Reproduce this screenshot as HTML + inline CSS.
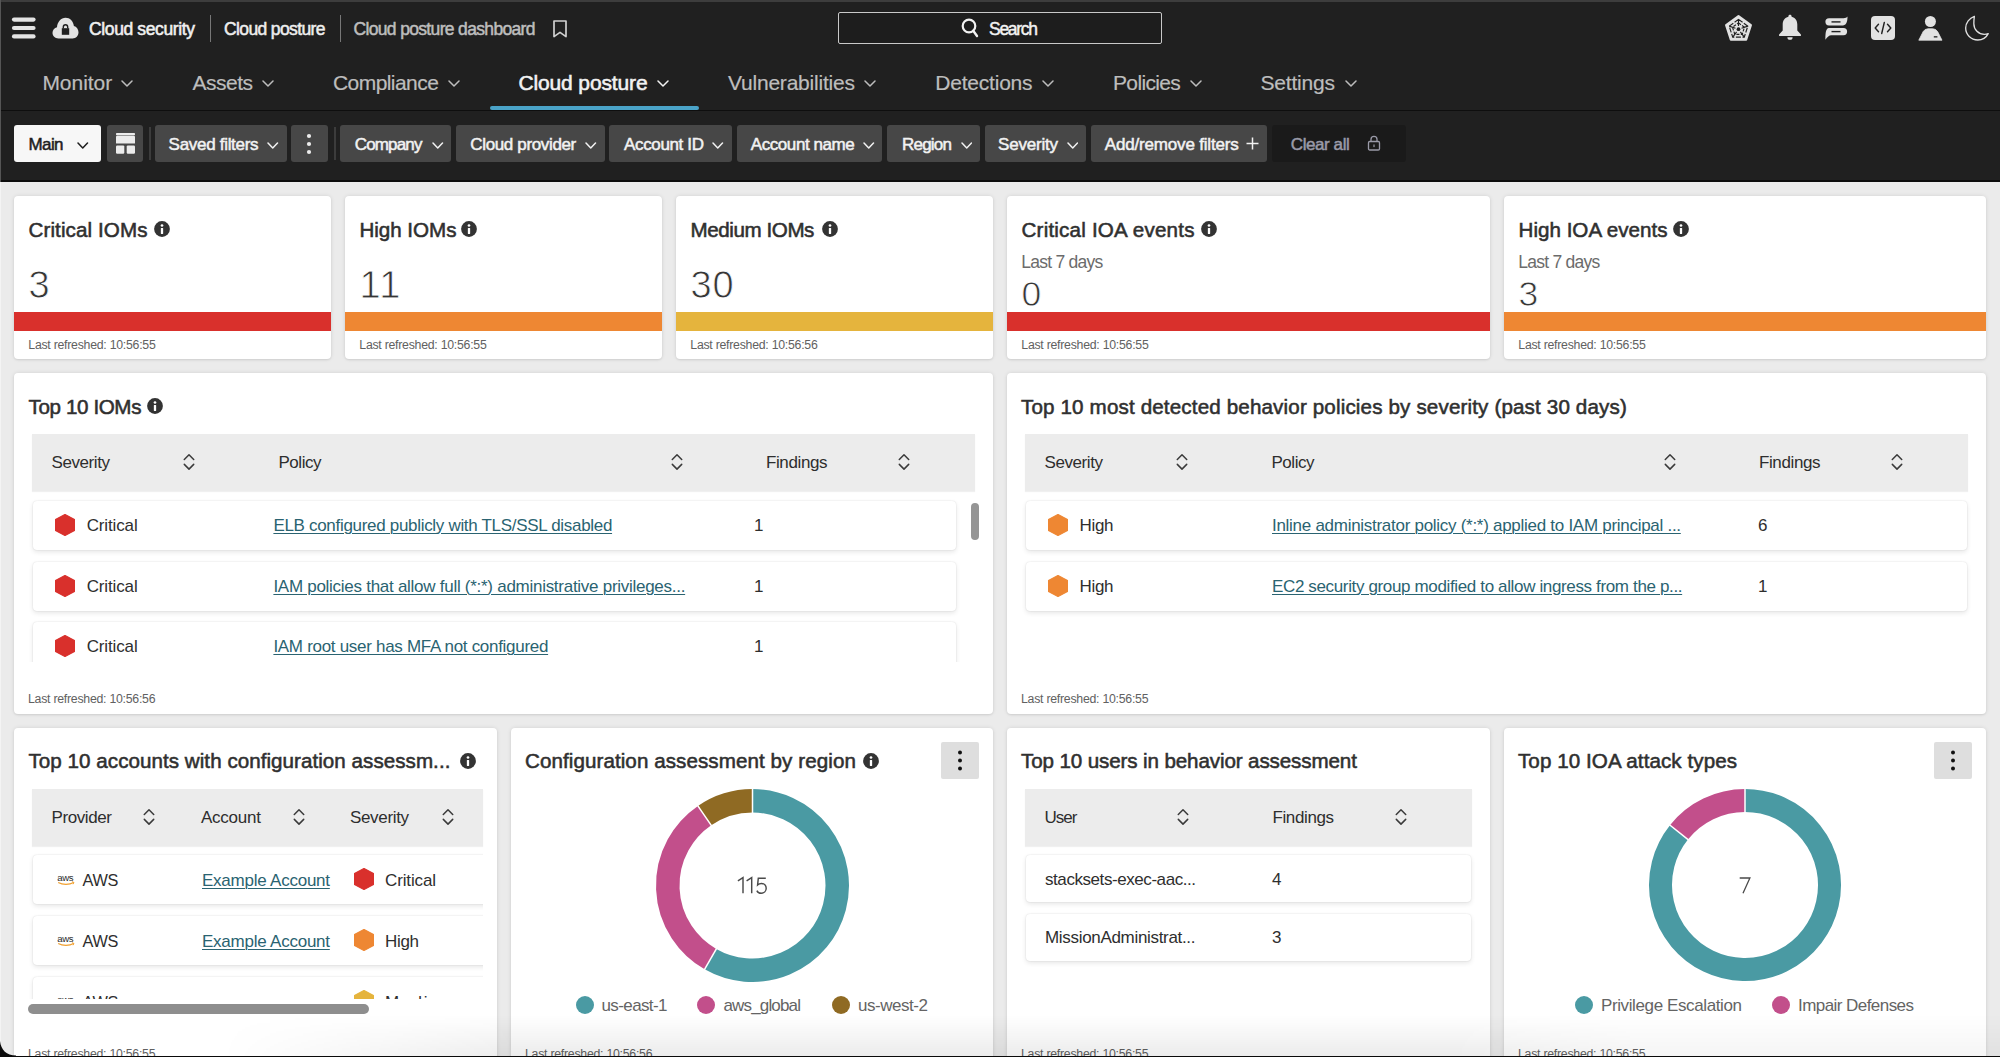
<!DOCTYPE html><html><head><meta charset="utf-8"><title>Cloud posture dashboard</title><style>
*{box-sizing:border-box;margin:0;padding:0}
html,body{width:2000px;height:1057px;overflow:hidden}
body{background:#ebebeb;font-family:"Liberation Sans",sans-serif;position:relative;color:#2b2b2b}
.sb{-webkit-text-stroke:0.45px currentColor}
.sb2{-webkit-text-stroke:0.55px currentColor}
.sm{-webkit-text-stroke:0.2px currentColor}
.sm3{-webkit-text-stroke:0.5px currentColor}
.thin{-webkit-text-stroke:0.8px #fff}
.card{position:absolute;background:#fff;border-radius:4px;box-shadow:0 0 4px rgba(0,0,0,.10),0 1px 2px rgba(0,0,0,.08)}
.row{position:absolute;background:#fff;border-radius:4px;box-shadow:0 2px 5px rgba(0,0,0,.10),0 0 1.5px rgba(0,0,0,.14)}
a{color:#2a6371;text-decoration:underline;text-underline-offset:2px;text-decoration-thickness:1px}
</style></head><body>
<div style="position:absolute;left:0px;top:0px;width:2000px;height:182px;background:#202020"></div>
<div style="position:absolute;left:0px;top:0px;width:2000px;height:2px;background:#3d3d3d"></div>
<div style="position:absolute;left:0px;top:109.5px;width:2000px;height:1.6px;background:#0e0e0e"></div>
<div style="position:absolute;left:0px;top:180px;width:2000px;height:2px;background:#0d0d0d"></div>
<svg style="position:absolute;left:11px;top:16px" width="26" height="24" viewBox="0 0 26 24"><g stroke="#e4e4e4" stroke-width="4.2" stroke-linecap="round"><line x1="3" y1="3.6" x2="22.5" y2="3.6"/><line x1="3" y1="12" x2="22.5" y2="12"/><line x1="3" y1="20.4" x2="22.5" y2="20.4"/></g></svg>
<svg style="position:absolute;left:52px;top:17px" width="27" height="22" viewBox="0 0 27 22"><path d="M6.5 21.5C3 21.5 0.5 19 0.5 15.8C0.5 13 2.4 10.8 5 10.2C5.4 5 9 0.8 13.6 0.8C17.9 0.8 21.3 4.3 21.9 8.9C24.6 9.6 26.5 12.2 26.5 15.3C26.5 18.8 24 21.5 20.6 21.5Z" fill="#e4e4e4"/><rect x="9.8" y="11.2" width="7.4" height="6.6" fill="#202020"/><path d="M11.3 11.6v-1.6a2.2 2.2 0 0 1 4.4 0v1.6" fill="none" stroke="#202020" stroke-width="1.4"/></svg>
<div class="sb2" style="position:absolute;left:89.0px;top:17.94px;font-size:17.5px;line-height:22px;color:#f0f0f0;white-space:nowrap;;letter-spacing:-0.374px">Cloud security</div>
<div style="position:absolute;left:210px;top:14.5px;width:1.2px;height:27px;background:#777"></div>
<div class="sm3" style="position:absolute;left:224.0px;top:17.94px;font-size:17.5px;line-height:22px;color:#eeeeee;white-space:nowrap;;letter-spacing:-0.620px">Cloud posture</div>
<div style="position:absolute;left:340px;top:14.5px;width:1.2px;height:27px;background:#777"></div>
<div class="sm3" style="position:absolute;left:353.5px;top:17.94px;font-size:17.5px;line-height:22px;color:#bdbdbd;white-space:nowrap;;letter-spacing:-0.660px">Cloud posture dashboard</div>
<svg style="position:absolute;left:552px;top:19.5px" width="16" height="18" viewBox="0 0 16 18"><path d="M2 1h12v15.6l-6-4.2-6 4.2z" fill="none" stroke="#d0d0d0" stroke-width="1.7" stroke-linejoin="round"/></svg>
<div style="position:absolute;left:838px;top:12px;width:324px;height:32px;border:1.6px solid #c9c9c9;border-radius:2px;background:#1d1d1d"></div>
<svg style="position:absolute;left:961px;top:18px" width="19" height="20" viewBox="0 0 19 20"><circle cx="8" cy="8" r="6.3" fill="none" stroke="#f2f2f2" stroke-width="2.2"/><line x1="12.2" y1="12.8" x2="16" y2="18" stroke="#f2f2f2" stroke-width="2.4" stroke-linecap="round"/></svg>
<div class="sb" style="position:absolute;left:989.0px;top:17.94px;font-size:17.5px;line-height:22px;color:#f2f2f2;white-space:nowrap;;letter-spacing:-1.295px">Search</div>
<svg style="position:absolute;left:1724px;top:14px" width="29" height="29" viewBox="0 0 29 29"><polygon points="14.50,2.20 26.86,11.18 22.14,25.72 6.86,25.72 2.14,11.18" fill="#e2e2e2" stroke="#e2e2e2" stroke-width="2.2" stroke-linejoin="round"/><g stroke="#202020" stroke-width="1.15" fill="none" stroke-dasharray="5 1.6"><polygon points="14.50,5.40 23.82,12.17 20.26,23.13 8.74,23.13 5.18,12.17"/><polygon points="14.50,8.90 20.49,13.25 18.20,20.30 10.80,20.30 8.51,13.25" stroke-dasharray="3 1.4"/></g><g stroke="#202020" stroke-width="1.15"><line x1="14.50" y1="12.00" x2="14.50" y2="5.40"/><line x1="17.54" y1="14.21" x2="23.82" y2="12.17"/><line x1="16.38" y1="17.79" x2="20.26" y2="23.13"/><line x1="12.62" y1="17.79" x2="8.74" y2="23.13"/><line x1="11.46" y1="14.21" x2="5.18" y2="12.17"/></g><circle cx="14.5" cy="15.2" r="1.9" fill="#202020"/></svg>
<svg style="position:absolute;left:1778px;top:14px" width="24" height="27" viewBox="0 0 24 27"><path d="M12 0.8c1 0 1.6 0.7 1.6 1.6v0.4c3.6 0.8 5.7 3.9 5.7 7.8v5.8l3.6 4.1v1.4H1.1v-1.4l3.6-4.1V10.6c0-3.9 2.1-7 5.7-7.8V2.4c0-0.9 0.6-1.6 1.6-1.6z" fill="#e2e2e2"/><path d="M9.4 23.2h5.2a2.6 2.6 0 0 1-5.2 0z" fill="#e2e2e2"/></svg>
<svg style="position:absolute;left:1825px;top:16px" width="23" height="24" viewBox="0 0 23 24"><path d="M4 2.2h14.5c2 0 3.2-0.7 4-1.6 0 3.9-0.6 8.8-4.4 8.8H4a3.6 3.6 0 0 1 0-7.2z" fill="#e2e2e2"/><path d="M4 12h14.5a3.6 3.6 0 0 1 0 7.2H6.2c-2.2 0-3.6 1.6-5.8 4.6C0.4 19 0.4 12 4 12z" fill="#e2e2e2"/><rect x="6.5" y="5.2" width="9" height="1.4" fill="#202020"/><rect x="6.5" y="14.9" width="9" height="1.4" fill="#202020"/></svg>
<svg style="position:absolute;left:1871px;top:16px" width="24" height="24" viewBox="0 0 24 24"><rect x="0" y="0" width="24" height="24" rx="4" fill="#e2e2e2"/><g fill="none" stroke="#202020" stroke-width="1.4" stroke-linecap="round" stroke-linejoin="round"><polyline points="7.5,8.2 4.2,12 7.5,15.8"/><polyline points="16.5,8.2 19.8,12 16.5,15.8"/><line x1="13.3" y1="6.5" x2="10.7" y2="17.5"/></g></svg>
<svg style="position:absolute;left:1918px;top:16px" width="25" height="25" viewBox="0 0 25 25"><circle cx="12.4" cy="5.5" r="5.5" fill="#e2e2e2"/><path d="M0.8 24.2L5.2 15.6Q6.8 12.8 10 12.8H14.8Q18 12.8 19.6 15.6L24 24.2Z" fill="#e2e2e2" stroke="#e2e2e2" stroke-width="0.8" stroke-linejoin="round"/><rect x="15.8" y="20.2" width="3.6" height="1.3" fill="#202020"/></svg>
<svg style="position:absolute;left:1963px;top:14px" width="27" height="28" viewBox="0 0 28 29"><g transform="translate(14 14.5) scale(0.92) translate(-14 -14.5)"><path d="M11.6 1.3C6 3.3 1.8 8.5 1.8 14.6c0 7.5 6.1 13.4 13.6 13.4 5.1 0 9.6-2.9 11.8-7.2-1.3 0.5-2.8 0.8-4.3 0.8-6.6 0-11.9-5.3-11.9-11.9 0-3.1 0.2-5.8 0.6-8.4z" fill="none" stroke="#e0e0e0" stroke-width="1.5" stroke-linejoin="round"/></g></svg>
<div class="sm" style="position:absolute;left:42.4px;top:70.32px;font-size:21.0px;line-height:26px;color:#bdbdbd;white-space:nowrap;;letter-spacing:-0.039px">Monitor</div>
<svg style="position:absolute;left:121px;top:80px" width="12" height="7" viewBox="0 0 12 7"><polyline points="1,1 6.0,6 11,1" fill="none" stroke="#bdbdbd" stroke-width="1.5" stroke-linecap="round" stroke-linejoin="round"/></svg>
<div class="sm" style="position:absolute;left:192.6px;top:70.32px;font-size:21.0px;line-height:26px;color:#bdbdbd;white-space:nowrap;;letter-spacing:-0.520px">Assets</div>
<svg style="position:absolute;left:262px;top:80px" width="12" height="7" viewBox="0 0 12 7"><polyline points="1,1 6.0,6 11,1" fill="none" stroke="#bdbdbd" stroke-width="1.5" stroke-linecap="round" stroke-linejoin="round"/></svg>
<div class="sm" style="position:absolute;left:333.0px;top:70.32px;font-size:21.0px;line-height:26px;color:#bdbdbd;white-space:nowrap;;letter-spacing:-0.564px">Compliance</div>
<svg style="position:absolute;left:448px;top:80px" width="12" height="7" viewBox="0 0 12 7"><polyline points="1,1 6.0,6 11,1" fill="none" stroke="#bdbdbd" stroke-width="1.5" stroke-linecap="round" stroke-linejoin="round"/></svg>
<div class="sb2" style="position:absolute;left:518.4px;top:70.32px;font-size:21.0px;line-height:26px;color:#f2f2f2;white-space:nowrap;;letter-spacing:-0.127px">Cloud posture</div>
<svg style="position:absolute;left:657px;top:80px" width="12" height="7" viewBox="0 0 12 7"><polyline points="1,1 6.0,6 11,1" fill="none" stroke="#f2f2f2" stroke-width="1.5" stroke-linecap="round" stroke-linejoin="round"/></svg>
<div class="sm" style="position:absolute;left:728.0px;top:70.32px;font-size:21.0px;line-height:26px;color:#bdbdbd;white-space:nowrap;;letter-spacing:-0.214px">Vulnerabilities</div>
<svg style="position:absolute;left:864px;top:80px" width="12" height="7" viewBox="0 0 12 7"><polyline points="1,1 6.0,6 11,1" fill="none" stroke="#bdbdbd" stroke-width="1.5" stroke-linecap="round" stroke-linejoin="round"/></svg>
<div class="sm" style="position:absolute;left:935.3px;top:70.32px;font-size:21.0px;line-height:26px;color:#bdbdbd;white-space:nowrap;;letter-spacing:-0.214px">Detections</div>
<svg style="position:absolute;left:1041.6px;top:80px" width="12" height="7" viewBox="0 0 12 7"><polyline points="1,1 6.0,6 11,1" fill="none" stroke="#bdbdbd" stroke-width="1.5" stroke-linecap="round" stroke-linejoin="round"/></svg>
<div class="sm" style="position:absolute;left:1113.0px;top:70.32px;font-size:21.0px;line-height:26px;color:#bdbdbd;white-space:nowrap;;letter-spacing:-0.649px">Policies</div>
<svg style="position:absolute;left:1190px;top:80px" width="12" height="7" viewBox="0 0 12 7"><polyline points="1,1 6.0,6 11,1" fill="none" stroke="#bdbdbd" stroke-width="1.5" stroke-linecap="round" stroke-linejoin="round"/></svg>
<div class="sm" style="position:absolute;left:1260.5px;top:70.32px;font-size:21.0px;line-height:26px;color:#bdbdbd;white-space:nowrap;;letter-spacing:-0.202px">Settings</div>
<svg style="position:absolute;left:1344.5px;top:80px" width="12" height="7" viewBox="0 0 12 7"><polyline points="1,1 6.0,6 11,1" fill="none" stroke="#bdbdbd" stroke-width="1.5" stroke-linecap="round" stroke-linejoin="round"/></svg>
<div style="position:absolute;left:490px;top:106px;width:209px;height:3.5px;background:#4aa3c8;border-radius:2px"></div>
<div style="position:absolute;left:14px;top:125px;width:87px;height:37px;background:#f7f7f7;border-radius:3px"></div>
<div class="sm3" style="position:absolute;left:28.6px;top:133.61px;font-size:17.0px;line-height:21px;color:#1e1e1e;white-space:nowrap;;letter-spacing:-0.630px">Main</div>
<svg style="position:absolute;left:77.2px;top:141.8px" width="11.5" height="7" viewBox="0 0 11.5 7"><polyline points="1,1 5.75,6 10.5,1" fill="none" stroke="#1e1e1e" stroke-width="1.5" stroke-linecap="round" stroke-linejoin="round"/></svg>
<div style="position:absolute;left:107px;top:125px;width:36px;height:37px;background:#474747;border-radius:3px"></div>
<svg style="position:absolute;left:115.5px;top:133px" width="19" height="21" viewBox="0 0 19 21"><rect x="0" y="0" width="19" height="2.4" rx="0.8" fill="#ececec"/><rect x="0" y="3.1" width="19" height="7.4" rx="0.6" fill="#ececec"/><rect x="0" y="12.4" width="8.3" height="8.3" rx="1.2" fill="#ececec"/><rect x="10.7" y="12.4" width="8.3" height="8.3" rx="1.2" fill="#ececec"/></svg>
<div style="position:absolute;left:149px;top:127px;width:2px;height:33px;background:#3c3c3c"></div>
<div style="position:absolute;left:155px;top:125px;width:132px;height:37px;background:#474747;border-radius:3px"></div>
<div class="sm3" style="position:absolute;left:168.6px;top:133.61px;font-size:17.0px;line-height:21px;color:#f2f2f2;white-space:nowrap;;letter-spacing:-0.299px">Saved filters</div>
<svg style="position:absolute;left:267.2px;top:141.8px" width="11.5" height="7" viewBox="0 0 11.5 7"><polyline points="1,1 5.75,6 10.5,1" fill="none" stroke="#f2f2f2" stroke-width="1.5" stroke-linecap="round" stroke-linejoin="round"/></svg>
<div style="position:absolute;left:291px;top:125px;width:37px;height:37px;background:#474747;border-radius:3px"></div>
<svg style="position:absolute;left:306px;top:133px" width="6" height="22" viewBox="0 0 6 22"><circle cx="3" cy="3" r="2.1" fill="#ececec"/><circle cx="3" cy="11" r="2.1" fill="#ececec"/><circle cx="3" cy="19" r="2.1" fill="#ececec"/></svg>
<div style="position:absolute;left:334px;top:127px;width:2px;height:33px;background:#3c3c3c"></div>
<div style="position:absolute;left:340px;top:125px;width:111px;height:37px;background:#474747;border-radius:3px"></div>
<div class="sm3" style="position:absolute;left:354.8px;top:133.61px;font-size:17.0px;line-height:21px;color:#f2f2f2;white-space:nowrap;;letter-spacing:-0.860px">Company</div>
<svg style="position:absolute;left:432.2px;top:141.8px" width="11.5" height="7" viewBox="0 0 11.5 7"><polyline points="1,1 5.75,6 10.5,1" fill="none" stroke="#f2f2f2" stroke-width="1.5" stroke-linecap="round" stroke-linejoin="round"/></svg>
<div style="position:absolute;left:456px;top:125px;width:149px;height:37px;background:#474747;border-radius:3px"></div>
<div class="sm3" style="position:absolute;left:470.3px;top:133.61px;font-size:17.0px;line-height:21px;color:#f2f2f2;white-space:nowrap;;letter-spacing:-0.353px">Cloud provider</div>
<svg style="position:absolute;left:585.2px;top:141.8px" width="11.5" height="7" viewBox="0 0 11.5 7"><polyline points="1,1 5.75,6 10.5,1" fill="none" stroke="#f2f2f2" stroke-width="1.5" stroke-linecap="round" stroke-linejoin="round"/></svg>
<div style="position:absolute;left:609px;top:125px;width:123px;height:37px;background:#474747;border-radius:3px"></div>
<div class="sm3" style="position:absolute;left:624.0px;top:133.61px;font-size:17.0px;line-height:21px;color:#f2f2f2;white-space:nowrap;;letter-spacing:-0.348px">Account ID</div>
<svg style="position:absolute;left:712.2px;top:141.8px" width="11.5" height="7" viewBox="0 0 11.5 7"><polyline points="1,1 5.75,6 10.5,1" fill="none" stroke="#f2f2f2" stroke-width="1.5" stroke-linecap="round" stroke-linejoin="round"/></svg>
<div style="position:absolute;left:737px;top:125px;width:145px;height:37px;background:#474747;border-radius:3px"></div>
<div class="sm3" style="position:absolute;left:750.8px;top:133.61px;font-size:17.0px;line-height:21px;color:#f2f2f2;white-space:nowrap;;letter-spacing:-0.429px">Account name</div>
<svg style="position:absolute;left:863.2px;top:141.8px" width="11.5" height="7" viewBox="0 0 11.5 7"><polyline points="1,1 5.75,6 10.5,1" fill="none" stroke="#f2f2f2" stroke-width="1.5" stroke-linecap="round" stroke-linejoin="round"/></svg>
<div style="position:absolute;left:887px;top:125px;width:93px;height:37px;background:#474747;border-radius:3px"></div>
<div class="sm3" style="position:absolute;left:902.0px;top:133.61px;font-size:17.0px;line-height:21px;color:#f2f2f2;white-space:nowrap;;letter-spacing:-0.778px">Region</div>
<svg style="position:absolute;left:960.7px;top:141.8px" width="11.5" height="7" viewBox="0 0 11.5 7"><polyline points="1,1 5.75,6 10.5,1" fill="none" stroke="#f2f2f2" stroke-width="1.5" stroke-linecap="round" stroke-linejoin="round"/></svg>
<div style="position:absolute;left:985px;top:125px;width:101px;height:37px;background:#474747;border-radius:3px"></div>
<div class="sm3" style="position:absolute;left:998.0px;top:133.61px;font-size:17.0px;line-height:21px;color:#f2f2f2;white-space:nowrap;;letter-spacing:-0.196px">Severity</div>
<svg style="position:absolute;left:1066.7px;top:141.8px" width="11.5" height="7" viewBox="0 0 11.5 7"><polyline points="1,1 5.75,6 10.5,1" fill="none" stroke="#f2f2f2" stroke-width="1.5" stroke-linecap="round" stroke-linejoin="round"/></svg>
<div style="position:absolute;left:1091px;top:125px;width:176px;height:37px;background:#474747;border-radius:3px"></div>
<div class="sm3" style="position:absolute;left:1104.8px;top:133.61px;font-size:17.0px;line-height:21px;color:#f2f2f2;white-space:nowrap;;letter-spacing:-0.178px">Add/remove filters</div>
<svg style="position:absolute;left:1246px;top:137px" width="13" height="13" viewBox="0 0 13 13"><path d="M6.5 0.5v12M0.5 6.5h12" stroke="#f2f2f2" stroke-width="1.5"/></svg>
<div style="position:absolute;left:1272px;top:125px;width:134px;height:37px;background:#1a1a1a;border-radius:3px"></div>
<div class="sm3" style="position:absolute;left:1290.8px;top:133.61px;font-size:17.0px;line-height:21px;color:#9a9aa8;white-space:nowrap;;letter-spacing:-0.424px">Clear all</div>
<svg style="position:absolute;left:1367px;top:135px" width="14" height="16" viewBox="0 0 14 16"><rect x="1.5" y="6.5" width="11" height="8.5" rx="1.2" fill="none" stroke="#9a9aa8" stroke-width="1.3"/><path d="M4 6.5V4.3a3 3 0 0 1 6 0V6.5" fill="none" stroke="#9a9aa8" stroke-width="1.3"/><rect x="6.4" y="9.5" width="1.2" height="2.6" fill="#9a9aa8"/></svg>
<div class="card" style="left:14px;top:196px;width:317px;height:163px"></div>
<div class="sb2" style="position:absolute;left:28.5px;top:216.56px;font-size:20.6px;line-height:26px;color:#303030;white-space:nowrap;;letter-spacing:0.097px">Critical IOMs</div>
<svg style="position:absolute;left:154px;top:221px" width="16" height="16" viewBox="0 0 16 16"><circle cx="8" cy="8" r="7.9" fill="#333333"/><circle cx="8" cy="4.5" r="1.35" fill="#fff"/><rect x="6.85" y="6.9" width="2.3" height="6" rx="0.4" fill="#fff"/></svg>
<div class="thin" style="position:absolute;left:28.5px;top:260.83px;font-size:38px;line-height:48px;color:#363636;white-space:nowrap;">3</div>
<div style="position:absolute;left:14px;top:312px;width:317px;height:18.5px;background:#d9302c"></div>
<div style="position:absolute;left:28.3px;top:338.24px;font-size:12.3px;line-height:15px;color:#616161;white-space:nowrap;;letter-spacing:-0.254px">Last refreshed: 10:56:55</div>
<div class="card" style="left:345px;top:196px;width:317px;height:163px"></div>
<div class="sb2" style="position:absolute;left:359.5px;top:216.56px;font-size:20.6px;line-height:26px;color:#303030;white-space:nowrap;;letter-spacing:-0.042px">High IOMs</div>
<svg style="position:absolute;left:461px;top:221px" width="16" height="16" viewBox="0 0 16 16"><circle cx="8" cy="8" r="7.9" fill="#333333"/><circle cx="8" cy="4.5" r="1.35" fill="#fff"/><rect x="6.85" y="6.9" width="2.3" height="6" rx="0.4" fill="#fff"/></svg>
<div class="thin" style="position:absolute;left:359.5px;top:260.83px;font-size:38px;line-height:48px;color:#363636;white-space:nowrap;;letter-spacing:1.480px">11</div>
<div style="position:absolute;left:345px;top:312px;width:317px;height:18.5px;background:#ee8733"></div>
<div style="position:absolute;left:359.3px;top:338.24px;font-size:12.3px;line-height:15px;color:#616161;white-space:nowrap;;letter-spacing:-0.254px">Last refreshed: 10:56:55</div>
<div class="card" style="left:676px;top:196px;width:317px;height:163px"></div>
<div class="sb2" style="position:absolute;left:690.5px;top:216.56px;font-size:20.6px;line-height:26px;color:#303030;white-space:nowrap;;letter-spacing:-0.424px">Medium IOMs</div>
<svg style="position:absolute;left:822px;top:221px" width="16" height="16" viewBox="0 0 16 16"><circle cx="8" cy="8" r="7.9" fill="#333333"/><circle cx="8" cy="4.5" r="1.35" fill="#fff"/><rect x="6.85" y="6.9" width="2.3" height="6" rx="0.4" fill="#fff"/></svg>
<div class="thin" style="position:absolute;left:690.5px;top:260.83px;font-size:38px;line-height:48px;color:#363636;white-space:nowrap;;letter-spacing:0.820px">30</div>
<div style="position:absolute;left:676px;top:312px;width:317px;height:18.5px;background:#e5b43d"></div>
<div style="position:absolute;left:690.3px;top:338.24px;font-size:12.3px;line-height:15px;color:#616161;white-space:nowrap;;letter-spacing:-0.254px">Last refreshed: 10:56:56</div>
<div class="card" style="left:1007px;top:196px;width:483px;height:163px"></div>
<div class="sb2" style="position:absolute;left:1021.5px;top:216.56px;font-size:20.6px;line-height:26px;color:#303030;white-space:nowrap;;letter-spacing:0.198px">Critical IOA events</div>
<svg style="position:absolute;left:1201px;top:221px" width="16" height="16" viewBox="0 0 16 16"><circle cx="8" cy="8" r="7.9" fill="#333333"/><circle cx="8" cy="4.5" r="1.35" fill="#fff"/><rect x="6.85" y="6.9" width="2.3" height="6" rx="0.4" fill="#fff"/></svg>
<div style="position:absolute;left:1021.3px;top:250.94px;font-size:17.5px;line-height:22px;color:#6b6b6b;white-space:nowrap;;letter-spacing:-0.751px">Last 7 days</div>
<div class="thin" style="position:absolute;left:1021.5px;top:272.00px;font-size:35.5px;line-height:44px;color:#363636;white-space:nowrap;">0</div>
<div style="position:absolute;left:1007px;top:312px;width:483px;height:18.5px;background:#d9302c"></div>
<div style="position:absolute;left:1021.3px;top:338.24px;font-size:12.3px;line-height:15px;color:#616161;white-space:nowrap;;letter-spacing:-0.254px">Last refreshed: 10:56:55</div>
<div class="card" style="left:1504px;top:196px;width:482px;height:163px"></div>
<div class="sb2" style="position:absolute;left:1518.5px;top:216.56px;font-size:20.6px;line-height:26px;color:#303030;white-space:nowrap;;letter-spacing:0.012px">High IOA events</div>
<svg style="position:absolute;left:1673px;top:221px" width="16" height="16" viewBox="0 0 16 16"><circle cx="8" cy="8" r="7.9" fill="#333333"/><circle cx="8" cy="4.5" r="1.35" fill="#fff"/><rect x="6.85" y="6.9" width="2.3" height="6" rx="0.4" fill="#fff"/></svg>
<div style="position:absolute;left:1518.3px;top:250.94px;font-size:17.5px;line-height:22px;color:#6b6b6b;white-space:nowrap;;letter-spacing:-0.751px">Last 7 days</div>
<div class="thin" style="position:absolute;left:1518.5px;top:272.00px;font-size:35.5px;line-height:44px;color:#363636;white-space:nowrap;">3</div>
<div style="position:absolute;left:1504px;top:312px;width:482px;height:18.5px;background:#ee8733"></div>
<div style="position:absolute;left:1518.3px;top:338.24px;font-size:12.3px;line-height:15px;color:#616161;white-space:nowrap;;letter-spacing:-0.254px">Last refreshed: 10:56:55</div>
<div class="card" style="left:14px;top:373px;width:979px;height:341px"></div>
<div class="sb2" style="position:absolute;left:28.5px;top:393.66px;font-size:20.6px;line-height:26px;color:#303030;white-space:nowrap;;letter-spacing:-0.380px">Top 10 IOMs</div>
<svg style="position:absolute;left:147px;top:398px" width="16" height="16" viewBox="0 0 16 16"><circle cx="8" cy="8" r="7.9" fill="#333333"/><circle cx="8" cy="4.5" r="1.35" fill="#fff"/><rect x="6.85" y="6.9" width="2.3" height="6" rx="0.4" fill="#fff"/></svg>
<div style="position:absolute;left:32px;top:434px;width:943px;height:57px;background:#ececec;box-shadow:0 1px 1px rgba(0,0,0,.06)"></div>
<div style="position:absolute;left:51.5px;top:452.11px;font-size:17.0px;line-height:21px;color:#2e2e2e;white-space:nowrap;;letter-spacing:-0.410px">Severity</div>
<svg style="position:absolute;left:183px;top:454px" width="12" height="17" viewBox="0 0 12 17"><polyline points="1.3,5.5 6,0.8 10.7,5.5" fill="none" stroke="#3a3a3a" stroke-width="1.5" stroke-linecap="round" stroke-linejoin="round"/><polyline points="1.3,10.4 6,15.1 10.7,10.4" fill="none" stroke="#3a3a3a" stroke-width="1.5" stroke-linecap="round" stroke-linejoin="round"/></svg>
<div style="position:absolute;left:278.5px;top:452.11px;font-size:17.0px;line-height:21px;color:#2e2e2e;white-space:nowrap;;letter-spacing:-0.478px">Policy</div>
<svg style="position:absolute;left:671px;top:454px" width="12" height="17" viewBox="0 0 12 17"><polyline points="1.3,5.5 6,0.8 10.7,5.5" fill="none" stroke="#3a3a3a" stroke-width="1.5" stroke-linecap="round" stroke-linejoin="round"/><polyline points="1.3,10.4 6,15.1 10.7,10.4" fill="none" stroke="#3a3a3a" stroke-width="1.5" stroke-linecap="round" stroke-linejoin="round"/></svg>
<div style="position:absolute;left:766.0px;top:452.11px;font-size:17.0px;line-height:21px;color:#2e2e2e;white-space:nowrap;;letter-spacing:-0.394px">Findings</div>
<svg style="position:absolute;left:898px;top:454px" width="12" height="17" viewBox="0 0 12 17"><polyline points="1.3,5.5 6,0.8 10.7,5.5" fill="none" stroke="#3a3a3a" stroke-width="1.5" stroke-linecap="round" stroke-linejoin="round"/><polyline points="1.3,10.4 6,15.1 10.7,10.4" fill="none" stroke="#3a3a3a" stroke-width="1.5" stroke-linecap="round" stroke-linejoin="round"/></svg>
<div style="position:absolute;left:20px;top:493px;width:950px;height:169px;overflow:hidden">
<div class="row" style="left:13px;top:7.699999999999989px;width:923px;height:49px"></div>
<div class="row" style="left:13px;top:68.5px;width:923px;height:49px"></div>
<div class="row" style="left:13px;top:129.29999999999995px;width:923px;height:49px"></div>
</div>
<svg style="position:absolute;left:55px;top:513.7px" width="20" height="22" viewBox="0 0 20 22"><polygon points="10.0,0.5 19.5,5.5 19.5,16.5 10.0,21.5 0.5,16.5 0.5,5.5" fill="#d9302c" stroke="#d9302c" stroke-width="1.2" stroke-linejoin="round"/></svg>
<div style="position:absolute;left:86.7px;top:514.81px;font-size:17.0px;line-height:21px;color:#2e2e2e;white-space:nowrap;;letter-spacing:-0.134px">Critical</div>
<div style="position:absolute;left:273.4px;top:514.81px;font-size:17.0px;line-height:21px;color:#2a6371;white-space:nowrap;;letter-spacing:-0.307px"><a>ELB configured publicly with TLS/SSL disabled</a></div>
<div style="position:absolute;left:754px;top:514.81px;font-size:17.0px;line-height:21px;color:#2e2e2e;white-space:nowrap;">1</div>
<svg style="position:absolute;left:55px;top:574.5px" width="20" height="22" viewBox="0 0 20 22"><polygon points="10.0,0.5 19.5,5.5 19.5,16.5 10.0,21.5 0.5,16.5 0.5,5.5" fill="#d9302c" stroke="#d9302c" stroke-width="1.2" stroke-linejoin="round"/></svg>
<div style="position:absolute;left:86.7px;top:575.61px;font-size:17.0px;line-height:21px;color:#2e2e2e;white-space:nowrap;;letter-spacing:-0.134px">Critical</div>
<div style="position:absolute;left:273.4px;top:575.61px;font-size:17.0px;line-height:21px;color:#2a6371;white-space:nowrap;;letter-spacing:-0.273px"><a>IAM policies that allow full (*:*) administrative privileges...</a></div>
<div style="position:absolute;left:754px;top:575.61px;font-size:17.0px;line-height:21px;color:#2e2e2e;white-space:nowrap;">1</div>
<svg style="position:absolute;left:55px;top:635.3px" width="20" height="22" viewBox="0 0 20 22"><polygon points="10.0,0.5 19.5,5.5 19.5,16.5 10.0,21.5 0.5,16.5 0.5,5.5" fill="#d9302c" stroke="#d9302c" stroke-width="1.2" stroke-linejoin="round"/></svg>
<div style="position:absolute;left:86.7px;top:636.41px;font-size:17.0px;line-height:21px;color:#2e2e2e;white-space:nowrap;;letter-spacing:-0.134px">Critical</div>
<div style="position:absolute;left:273.4px;top:636.41px;font-size:17.0px;line-height:21px;color:#2a6371;white-space:nowrap;;letter-spacing:-0.296px"><a>IAM root user has MFA not configured</a></div>
<div style="position:absolute;left:754px;top:636.41px;font-size:17.0px;line-height:21px;color:#2e2e2e;white-space:nowrap;">1</div>
<div style="position:absolute;left:971px;top:503px;width:8px;height:37px;background:#959595;border-radius:4px"></div>
<div style="position:absolute;left:28.0px;top:692.24px;font-size:12.3px;line-height:15px;color:#616161;white-space:nowrap;;letter-spacing:-0.254px">Last refreshed: 10:56:56</div>
<div class="card" style="left:1007px;top:373px;width:979px;height:341px"></div>
<div class="sb2" style="position:absolute;left:1021.0px;top:393.66px;font-size:20.6px;line-height:26px;color:#303030;white-space:nowrap;;letter-spacing:0.147px">Top 10 most detected behavior policies by severity (past 30 days)</div>
<div style="position:absolute;left:1025px;top:434px;width:943px;height:57px;background:#ececec;box-shadow:0 1px 1px rgba(0,0,0,.06)"></div>
<div style="position:absolute;left:1044.5px;top:452.11px;font-size:17.0px;line-height:21px;color:#2e2e2e;white-space:nowrap;;letter-spacing:-0.410px">Severity</div>
<svg style="position:absolute;left:1176px;top:454px" width="12" height="17" viewBox="0 0 12 17"><polyline points="1.3,5.5 6,0.8 10.7,5.5" fill="none" stroke="#3a3a3a" stroke-width="1.5" stroke-linecap="round" stroke-linejoin="round"/><polyline points="1.3,10.4 6,15.1 10.7,10.4" fill="none" stroke="#3a3a3a" stroke-width="1.5" stroke-linecap="round" stroke-linejoin="round"/></svg>
<div style="position:absolute;left:1271.5px;top:452.11px;font-size:17.0px;line-height:21px;color:#2e2e2e;white-space:nowrap;;letter-spacing:-0.478px">Policy</div>
<svg style="position:absolute;left:1664px;top:454px" width="12" height="17" viewBox="0 0 12 17"><polyline points="1.3,5.5 6,0.8 10.7,5.5" fill="none" stroke="#3a3a3a" stroke-width="1.5" stroke-linecap="round" stroke-linejoin="round"/><polyline points="1.3,10.4 6,15.1 10.7,10.4" fill="none" stroke="#3a3a3a" stroke-width="1.5" stroke-linecap="round" stroke-linejoin="round"/></svg>
<div style="position:absolute;left:1759.0px;top:452.11px;font-size:17.0px;line-height:21px;color:#2e2e2e;white-space:nowrap;;letter-spacing:-0.394px">Findings</div>
<svg style="position:absolute;left:1891px;top:454px" width="12" height="17" viewBox="0 0 12 17"><polyline points="1.3,5.5 6,0.8 10.7,5.5" fill="none" stroke="#3a3a3a" stroke-width="1.5" stroke-linecap="round" stroke-linejoin="round"/><polyline points="1.3,10.4 6,15.1 10.7,10.4" fill="none" stroke="#3a3a3a" stroke-width="1.5" stroke-linecap="round" stroke-linejoin="round"/></svg>
<div class="row" style="left:1026px;top:500.7px;width:941px;height:49px"></div>
<svg style="position:absolute;left:1048px;top:513.7px" width="20" height="22" viewBox="0 0 20 22"><polygon points="10.0,0.5 19.5,5.5 19.5,16.5 10.0,21.5 0.5,16.5 0.5,5.5" fill="#ee8733" stroke="#ee8733" stroke-width="1.2" stroke-linejoin="round"/></svg>
<div style="position:absolute;left:1079.5px;top:514.81px;font-size:17.0px;line-height:21px;color:#2e2e2e;white-space:nowrap;;letter-spacing:-0.312px">High</div>
<div style="position:absolute;left:1272.0px;top:514.81px;font-size:17.0px;line-height:21px;color:#2a6371;white-space:nowrap;;letter-spacing:-0.280px"><a>Inline administrator policy (*:*) applied to IAM principal ...</a></div>
<div style="position:absolute;left:1758px;top:514.81px;font-size:17.0px;line-height:21px;color:#2e2e2e;white-space:nowrap;">6</div>
<div class="row" style="left:1026px;top:561.5px;width:941px;height:49px"></div>
<svg style="position:absolute;left:1048px;top:574.5px" width="20" height="22" viewBox="0 0 20 22"><polygon points="10.0,0.5 19.5,5.5 19.5,16.5 10.0,21.5 0.5,16.5 0.5,5.5" fill="#ee8733" stroke="#ee8733" stroke-width="1.2" stroke-linejoin="round"/></svg>
<div style="position:absolute;left:1079.5px;top:575.61px;font-size:17.0px;line-height:21px;color:#2e2e2e;white-space:nowrap;;letter-spacing:-0.312px">High</div>
<div style="position:absolute;left:1272.0px;top:575.61px;font-size:17.0px;line-height:21px;color:#2a6371;white-space:nowrap;;letter-spacing:-0.357px"><a>EC2 security group modified to allow ingress from the p...</a></div>
<div style="position:absolute;left:1758px;top:575.61px;font-size:17.0px;line-height:21px;color:#2e2e2e;white-space:nowrap;">1</div>
<div style="position:absolute;left:1021.0px;top:692.24px;font-size:12.3px;line-height:15px;color:#616161;white-space:nowrap;;letter-spacing:-0.254px">Last refreshed: 10:56:55</div>
<div class="card" style="left:14px;top:728px;width:483px;height:340px"></div>
<div class="card" style="left:511px;top:728px;width:482px;height:340px"></div>
<div class="card" style="left:1007px;top:728px;width:483px;height:340px"></div>
<div class="card" style="left:1504px;top:728px;width:482px;height:340px"></div>
<div class="sb2" style="position:absolute;left:28.5px;top:748.26px;font-size:20.6px;line-height:26px;color:#303030;white-space:nowrap;;letter-spacing:0.040px">Top 10 accounts with configuration assessm...</div>
<svg style="position:absolute;left:460px;top:753px" width="16" height="16" viewBox="0 0 16 16"><circle cx="8" cy="8" r="7.9" fill="#333333"/><circle cx="8" cy="4.5" r="1.35" fill="#fff"/><rect x="6.85" y="6.9" width="2.3" height="6" rx="0.4" fill="#fff"/></svg>
<div style="position:absolute;left:32px;top:789px;width:451px;height:57px;background:#ececec;box-shadow:0 1px 1px rgba(0,0,0,.06)"></div>
<div style="position:absolute;left:51.5px;top:807.11px;font-size:17.0px;line-height:21px;color:#2e2e2e;white-space:nowrap;;letter-spacing:-0.404px">Provider</div>
<svg style="position:absolute;left:143px;top:809px" width="12" height="17" viewBox="0 0 12 17"><polyline points="1.3,5.5 6,0.8 10.7,5.5" fill="none" stroke="#3a3a3a" stroke-width="1.5" stroke-linecap="round" stroke-linejoin="round"/><polyline points="1.3,10.4 6,15.1 10.7,10.4" fill="none" stroke="#3a3a3a" stroke-width="1.5" stroke-linecap="round" stroke-linejoin="round"/></svg>
<div style="position:absolute;left:201.0px;top:807.11px;font-size:17.0px;line-height:21px;color:#2e2e2e;white-space:nowrap;;letter-spacing:-0.242px">Account</div>
<svg style="position:absolute;left:293px;top:809px" width="12" height="17" viewBox="0 0 12 17"><polyline points="1.3,5.5 6,0.8 10.7,5.5" fill="none" stroke="#3a3a3a" stroke-width="1.5" stroke-linecap="round" stroke-linejoin="round"/><polyline points="1.3,10.4 6,15.1 10.7,10.4" fill="none" stroke="#3a3a3a" stroke-width="1.5" stroke-linecap="round" stroke-linejoin="round"/></svg>
<div style="position:absolute;left:350.0px;top:807.11px;font-size:17.0px;line-height:21px;color:#2e2e2e;white-space:nowrap;;letter-spacing:-0.339px">Severity</div>
<svg style="position:absolute;left:442px;top:809px" width="12" height="17" viewBox="0 0 12 17"><polyline points="1.3,5.5 6,0.8 10.7,5.5" fill="none" stroke="#3a3a3a" stroke-width="1.5" stroke-linecap="round" stroke-linejoin="round"/><polyline points="1.3,10.4 6,15.1 10.7,10.4" fill="none" stroke="#3a3a3a" stroke-width="1.5" stroke-linecap="round" stroke-linejoin="round"/></svg>
<div style="position:absolute;left:20px;top:848px;width:463px;height:151px;overflow:hidden">
<div class="row" style="left:13px;top:7px;width:470px;height:49px"></div>
<div class="row" style="left:13px;top:68px;width:470px;height:49px"></div>
<div class="row" style="left:13px;top:129px;width:470px;height:49px"></div>
<svg style="position:absolute;left:37px;top:24.5px" width="19" height="13" viewBox="0 0 19 13"><text x="0.3" y="7.6" font-size="9.6" font-family="Liberation Sans" fill="#2a2a2a" letter-spacing="-0.4">aws</text><path d="M1.2 9.6c4.5 2.4 11 2.4 15.5 0" fill="none" stroke="#f0a030" stroke-width="1.1"/><path d="M15 8.6l2 0.9-0.9 1.7" fill="none" stroke="#f0a030" stroke-width="0.9"/></svg>
<div style="position:absolute;left:62.5px;top:22.15px;font-size:16.3px;line-height:20px;color:#2e2e2e;white-space:nowrap;letter-spacing:-0.3px">AWS</div>
<div style="position:absolute;left:182.0px;top:22.11px;font-size:17.0px;line-height:21px;color:#2a6371;white-space:nowrap;;letter-spacing:-0.237px"><a>Example Account</a></div>
<div style="position:absolute;left:334px;top:20px">
<svg style="position:absolute;left:0px;top:0px" width="20" height="22" viewBox="0 0 20 22"><polygon points="10.0,0.5 19.5,5.5 19.5,16.5 10.0,21.5 0.5,16.5 0.5,5.5" fill="#d9302c" stroke="#d9302c" stroke-width="1.2" stroke-linejoin="round"/></svg>
</div>
<div style="position:absolute;left:365.0px;top:22.11px;font-size:17.0px;line-height:21px;color:#2e2e2e;white-space:nowrap;;letter-spacing:-0.134px">Critical</div>
<svg style="position:absolute;left:37px;top:85.5px" width="19" height="13" viewBox="0 0 19 13"><text x="0.3" y="7.6" font-size="9.6" font-family="Liberation Sans" fill="#2a2a2a" letter-spacing="-0.4">aws</text><path d="M1.2 9.6c4.5 2.4 11 2.4 15.5 0" fill="none" stroke="#f0a030" stroke-width="1.1"/><path d="M15 8.6l2 0.9-0.9 1.7" fill="none" stroke="#f0a030" stroke-width="0.9"/></svg>
<div style="position:absolute;left:62.5px;top:83.15px;font-size:16.3px;line-height:20px;color:#2e2e2e;white-space:nowrap;letter-spacing:-0.3px">AWS</div>
<div style="position:absolute;left:182.0px;top:83.11px;font-size:17.0px;line-height:21px;color:#2a6371;white-space:nowrap;;letter-spacing:-0.237px"><a>Example Account</a></div>
<div style="position:absolute;left:334px;top:81px">
<svg style="position:absolute;left:0px;top:0px" width="20" height="22" viewBox="0 0 20 22"><polygon points="10.0,0.5 19.5,5.5 19.5,16.5 10.0,21.5 0.5,16.5 0.5,5.5" fill="#ee8733" stroke="#ee8733" stroke-width="1.2" stroke-linejoin="round"/></svg>
</div>
<div style="position:absolute;left:365.0px;top:83.11px;font-size:17.0px;line-height:21px;color:#2e2e2e;white-space:nowrap;;letter-spacing:-0.312px">High</div>
<svg style="position:absolute;left:37px;top:146.5px" width="19" height="13" viewBox="0 0 19 13"><text x="0.3" y="7.6" font-size="9.6" font-family="Liberation Sans" fill="#2a2a2a" letter-spacing="-0.4">aws</text><path d="M1.2 9.6c4.5 2.4 11 2.4 15.5 0" fill="none" stroke="#f0a030" stroke-width="1.1"/><path d="M15 8.6l2 0.9-0.9 1.7" fill="none" stroke="#f0a030" stroke-width="0.9"/></svg>
<div style="position:absolute;left:62.5px;top:144.15px;font-size:16.3px;line-height:20px;color:#2e2e2e;white-space:nowrap;letter-spacing:-0.3px">AWS</div>
<div style="position:absolute;left:334px;top:142px">
<svg style="position:absolute;left:0px;top:0px" width="20" height="22" viewBox="0 0 20 22"><polygon points="10.0,0.5 19.5,5.5 19.5,16.5 10.0,21.5 0.5,16.5 0.5,5.5" fill="#e5b43d" stroke="#e5b43d" stroke-width="1.2" stroke-linejoin="round"/></svg>
</div>
<div style="position:absolute;left:365.0px;top:144.11px;font-size:17.0px;line-height:21px;color:#2e2e2e;white-space:nowrap;;letter-spacing:1.913px">Medium</div>
</div>
<div style="position:absolute;left:28px;top:1004px;width:341px;height:10px;background:#8e8e8e;border-radius:5px"></div>
<div class="sb2" style="position:absolute;left:525.0px;top:748.26px;font-size:20.6px;line-height:26px;color:#303030;white-space:nowrap;;letter-spacing:0.071px">Configuration assessment by region</div>
<svg style="position:absolute;left:863px;top:753px" width="16" height="16" viewBox="0 0 16 16"><circle cx="8" cy="8" r="7.9" fill="#333333"/><circle cx="8" cy="4.5" r="1.35" fill="#fff"/><rect x="6.85" y="6.9" width="2.3" height="6" rx="0.4" fill="#fff"/></svg>
<div style="position:absolute;left:941px;top:742px;width:38px;height:37px;background:#dedede;border-radius:2px"></div>
<svg style="position:absolute;left:956px;top:749px" width="8" height="23" viewBox="0 0 8 23"><circle cx="4" cy="3.5" r="2" fill="#111"/><circle cx="4" cy="11.5" r="2" fill="#111"/><circle cx="4" cy="19.5" r="2" fill="#111"/></svg>
<svg style="position:absolute;left:653.5px;top:786.5px" width="197.0" height="197.0" viewBox="-98.5 -98.5 197.0 197.0"><path d="M0.00 -84.75A84.75 84.75 0 1 1 -42.04 73.59" fill="none" stroke="#4a9aa3" stroke-width="23.5"/><path d="M-42.04 73.59A84.75 84.75 0 0 1 -47.92 -69.90" fill="none" stroke="#c24f8b" stroke-width="23.5"/><path d="M-47.92 -69.90A84.75 84.75 0 0 1 -0.00 -84.75" fill="none" stroke="#8f6a23" stroke-width="23.5"/><line x1="0.00" y1="-72.00" x2="0.00" y2="-97.50" stroke="#fff" stroke-width="1.5"/><line x1="-35.72" y1="62.52" x2="-48.37" y2="84.66" stroke="#fff" stroke-width="1.5"/><line x1="-40.71" y1="-59.38" x2="-55.13" y2="-80.42" stroke="#fff" stroke-width="1.5"/></svg>
<svg style="position:absolute;left:737px;top:876px" width="31" height="19" viewBox="0 0 31 19"><g fill="none" stroke="#4a4a4a" stroke-width="1.45" stroke-linecap="butt" stroke-linejoin="miter"><path d="M0.9 4.9L6 1.6V17.3"/><path d="M9.6 4.9L14.7 1.6V17.3"/><path d="M28.8 2.2H21.3L20.6 8.9C21.6 8 23 7.4 24.4 7.4C27.2 7.4 29.2 9.5 29.2 12.3C29.2 15.1 27.1 17.3 24.2 17.3C22.2 17.3 20.6 16.3 19.9 14.6"/></g></svg>
<div style="position:absolute;left:576px;top:996px;width:18px;height:18px;border-radius:50%;background:#4a9aa3"></div>
<div style="position:absolute;left:601.5px;top:994.61px;font-size:17.0px;line-height:21px;color:#646464;white-space:nowrap;;letter-spacing:-0.611px">us-east-1</div>
<div style="position:absolute;left:697px;top:996px;width:18px;height:18px;border-radius:50%;background:#c24f8b"></div>
<div style="position:absolute;left:723.5px;top:994.61px;font-size:17.0px;line-height:21px;color:#646464;white-space:nowrap;;letter-spacing:-0.843px">aws_global</div>
<div style="position:absolute;left:832px;top:996px;width:18px;height:18px;border-radius:50%;background:#8f6a23"></div>
<div style="position:absolute;left:858.0px;top:994.61px;font-size:17.0px;line-height:21px;color:#646464;white-space:nowrap;;letter-spacing:-0.462px">us-west-2</div>
<div class="sb2" style="position:absolute;left:1021.0px;top:748.26px;font-size:20.6px;line-height:26px;color:#303030;white-space:nowrap;;letter-spacing:-0.121px">Top 10 users in behavior assessment</div>
<div style="position:absolute;left:1025px;top:789px;width:447px;height:57px;background:#ececec;box-shadow:0 1px 1px rgba(0,0,0,.06)"></div>
<div style="position:absolute;left:1044.5px;top:807.11px;font-size:17.0px;line-height:21px;color:#2e2e2e;white-space:nowrap;;letter-spacing:-0.957px">User</div>
<svg style="position:absolute;left:1177px;top:809px" width="12" height="17" viewBox="0 0 12 17"><polyline points="1.3,5.5 6,0.8 10.7,5.5" fill="none" stroke="#3a3a3a" stroke-width="1.5" stroke-linecap="round" stroke-linejoin="round"/><polyline points="1.3,10.4 6,15.1 10.7,10.4" fill="none" stroke="#3a3a3a" stroke-width="1.5" stroke-linecap="round" stroke-linejoin="round"/></svg>
<div style="position:absolute;left:1272.5px;top:807.11px;font-size:17.0px;line-height:21px;color:#2e2e2e;white-space:nowrap;;letter-spacing:-0.394px">Findings</div>
<svg style="position:absolute;left:1395px;top:809px" width="12" height="17" viewBox="0 0 12 17"><polyline points="1.3,5.5 6,0.8 10.7,5.5" fill="none" stroke="#3a3a3a" stroke-width="1.5" stroke-linecap="round" stroke-linejoin="round"/><polyline points="1.3,10.4 6,15.1 10.7,10.4" fill="none" stroke="#3a3a3a" stroke-width="1.5" stroke-linecap="round" stroke-linejoin="round"/></svg>
<div class="row" style="left:1026px;top:855px;width:445px;height:47px"></div>
<div style="position:absolute;left:1045.0px;top:868.61px;font-size:17.0px;line-height:21px;color:#2e2e2e;white-space:nowrap;;letter-spacing:-0.431px">stacksets-exec-aac...</div>
<div style="position:absolute;left:1272px;top:868.61px;font-size:17.0px;line-height:21px;color:#2e2e2e;white-space:nowrap;">4</div>
<div class="row" style="left:1026px;top:913.5px;width:445px;height:47px"></div>
<div style="position:absolute;left:1045.0px;top:927.11px;font-size:17.0px;line-height:21px;color:#2e2e2e;white-space:nowrap;;letter-spacing:-0.316px">MissionAdministrat...</div>
<div style="position:absolute;left:1272px;top:927.11px;font-size:17.0px;line-height:21px;color:#2e2e2e;white-space:nowrap;">3</div>
<div class="sb2" style="position:absolute;left:1518.0px;top:748.26px;font-size:20.6px;line-height:26px;color:#303030;white-space:nowrap;;letter-spacing:0.067px">Top 10 IOA attack types</div>
<div style="position:absolute;left:1934px;top:742px;width:38px;height:37px;background:#dedede;border-radius:2px"></div>
<svg style="position:absolute;left:1949px;top:749px" width="8" height="23" viewBox="0 0 8 23"><circle cx="4" cy="3.5" r="2" fill="#111"/><circle cx="4" cy="11.5" r="2" fill="#111"/><circle cx="4" cy="19.5" r="2" fill="#111"/></svg>
<svg style="position:absolute;left:1647px;top:787px" width="196" height="196" viewBox="-98 -98 196 196"><path d="M0.00 -84.50A84.5 84.5 0 1 1 -66.06 -52.68" fill="none" stroke="#4a9aa3" stroke-width="23"/><path d="M-66.06 -52.68A84.5 84.5 0 0 1 -0.00 -84.50" fill="none" stroke="#c24f8b" stroke-width="23"/><line x1="0.00" y1="-72.00" x2="0.00" y2="-97.00" stroke="#fff" stroke-width="1.5"/><line x1="-56.29" y1="-44.89" x2="-75.84" y2="-60.48" stroke="#fff" stroke-width="1.5"/></svg>
<svg style="position:absolute;left:1737px;top:876px" width="15" height="19" viewBox="0 0 15 19"><path d="M2.7 2H12.9L6 17.3" fill="none" stroke="#4a4a4a" stroke-width="1.3"/></svg>
<div style="position:absolute;left:1575px;top:996px;width:18px;height:18px;border-radius:50%;background:#4a9aa3"></div>
<div style="position:absolute;left:1601.0px;top:994.61px;font-size:17.0px;line-height:21px;color:#646464;white-space:nowrap;;letter-spacing:-0.386px">Privilege Escalation</div>
<div style="position:absolute;left:1772px;top:996px;width:18px;height:18px;border-radius:50%;background:#c24f8b"></div>
<div style="position:absolute;left:1798.0px;top:994.61px;font-size:17.0px;line-height:21px;color:#646464;white-space:nowrap;;letter-spacing:-0.554px">Impair Defenses</div>
<div style="position:absolute;left:28.0px;top:1046.94px;font-size:12.3px;line-height:15px;color:#616161;white-space:nowrap;;letter-spacing:-0.254px">Last refreshed: 10:56:55</div>
<div style="position:absolute;left:525.0px;top:1046.94px;font-size:12.3px;line-height:15px;color:#616161;white-space:nowrap;;letter-spacing:-0.254px">Last refreshed: 10:56:56</div>
<div style="position:absolute;left:1021.0px;top:1046.94px;font-size:12.3px;line-height:15px;color:#616161;white-space:nowrap;;letter-spacing:-0.254px">Last refreshed: 10:56:55</div>
<div style="position:absolute;left:1518.0px;top:1046.94px;font-size:12.3px;line-height:15px;color:#616161;white-space:nowrap;;letter-spacing:-0.254px">Last refreshed: 10:56:55</div>
<div style="position:absolute;left:0px;top:1015px;width:2000px;height:41px;background:linear-gradient(to bottom,rgba(0,0,0,0),rgba(0,0,0,.075));-webkit-mask-image:linear-gradient(to right,transparent 220px,#000 520px,#000 1450px,rgba(0,0,0,.5) 1650px,rgba(0,0,0,.5) 2000px);pointer-events:none"></div>
<div style="position:absolute;left:0px;top:1055.5px;width:2000px;height:2px;background:#0a0a0a"></div>
<div style="position:absolute;left:0px;top:0px;width:1px;height:182px;background:#555"></div>
<div style="position:absolute;left:0px;top:182px;width:1px;height:875px;background:#f4f4f4"></div>
<svg style="position:absolute;left:0;top:1041px" width="16" height="16" viewBox="0 0 16 16"><path d="M0 0V16H16V14.6C6.5 14.6 1 9 0 0z" fill="#0a0a0a"/></svg>
</body></html>
